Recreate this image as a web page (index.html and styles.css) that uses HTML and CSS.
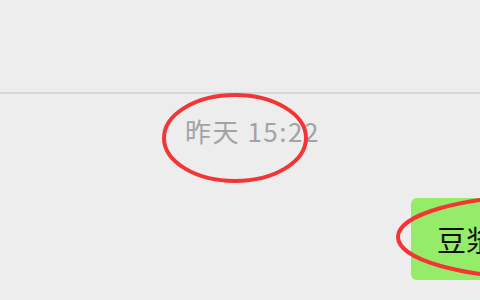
FILE: index.html
```html
<!DOCTYPE html>
<html lang="zh">
<head>
<meta charset="utf-8">
<link rel="stylesheet" href="styles.css">
</head>
<body>
<div class="page">
  <div class="top"></div>
  <div class="chat">
    <div class="time">昨天 15:22</div>
    <div class="row">
      <div class="bubble">豆浆</div>
    </div>
  </div>
  <svg class="marks" width="480" height="300" viewBox="0 0 480 300">
    <ellipse cx="235" cy="138" rx="71" ry="43" fill="none" stroke="#f43535" stroke-width="4"/>
    <ellipse cx="544" cy="237" rx="146" ry="41" fill="none" stroke="#f43535" stroke-width="4"/>
  </svg>
</div>
</body>
</html>
```
FILE: styles.css
```css
html, body {
  margin: 0;
  padding: 0;
  background: #ededed;
  overflow: hidden;
}
.page {
  position: relative;
  width: 480px;
  height: 300px;
  overflow: hidden;
  font-family: "Noto Sans CJK SC", "Noto Sans", sans-serif;
}
.top {
  height: 92px;
  border-bottom: 2px solid #d8d8d8;
}
.chat {
  display: flex;
  flex-direction: column;
}
.time {
  width: 505px;
  text-align: center;
  font-size: 26px;
  line-height: 30px;
  letter-spacing: 1.5px;
  color: #a3a3a3;
  margin-top: 22px;
}
.row {
  display: flex;
  padding-left: 411px;
  margin-top: 52px;
}
.bubble {
  flex: none;
  background: #95ec69;
  border-radius: 6px;
  padding: 23px 26px;
  font-size: 29px;
  line-height: 36px;
  color: #111;
  white-space: nowrap;
}
.marks {
  position: absolute;
  left: 0;
  top: 0;
}
```
